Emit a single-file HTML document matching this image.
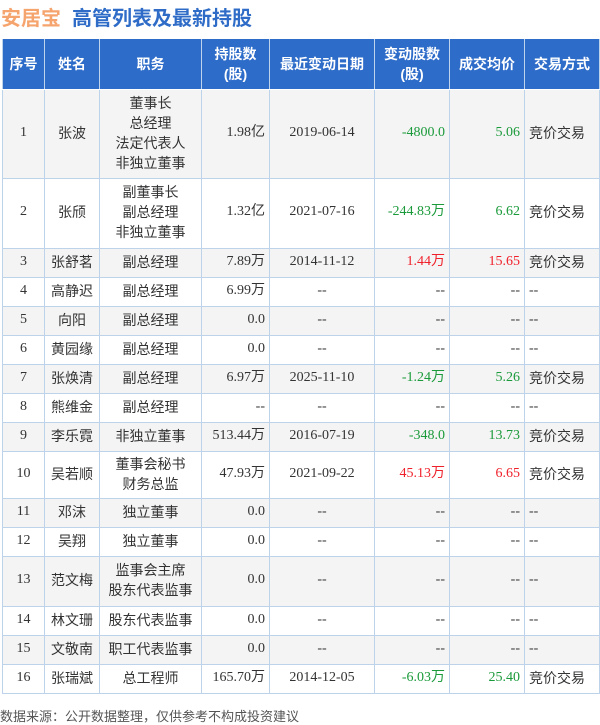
<!DOCTYPE html>
<html><head><meta charset="utf-8"><style>
body{margin:0;width:600px;height:724px;background:#fff;position:relative;overflow:hidden;font-family:"Liberation Serif","Noto Sans CJK SC",serif;color:#333}
.t{position:absolute;left:1px;top:2px;font:bold 20px "Liberation Sans","Noto Sans CJK SC",sans-serif}
.t .a{color:#f6a46e}.t .b{color:#2e6cc7;margin-left:11px}
table{position:absolute;left:2px;top:39px;border-collapse:collapse;table-layout:fixed;width:597px;font-size:14px}
td,th{border:1.5px solid #bcd3ea;padding:0 4px;line-height:20px}
th{background:#2e6cc9;color:#fff;font:bold 14px "Liberation Sans","Noto Sans CJK SC",sans-serif;height:50px;border-color:#fff #bcd3ea;border-top:none}
tr:nth-child(even) td{background:#f4f4f4}
td{text-align:center;padding-bottom:3px}
.r{text-align:right}.l{text-align:left}
.g{color:#1a9a3a}.red{color:#f0202a}
.cn{font-family:"Liberation Sans","Noto Sans CJK SC",sans-serif}
.f{position:absolute;left:0;top:706px;font:13px "Liberation Sans","Noto Sans CJK SC",sans-serif;color:#555}
</style></head><body>
<div class="t"><span class="a">安居宝</span><span class="b">高管列表及最新持股</span></div>
<table>
<colgroup><col style="width:42px"><col style="width:55px"><col style="width:102px"><col style="width:68px"><col style="width:105px"><col style="width:75px"><col style="width:75px"><col style="width:75px"></colgroup>
<tr><th>序号</th><th>姓名</th><th>职务</th><th>持股数<br>(股)</th><th>最近变动日期</th><th>变动股数<br>(股)</th><th>成交均价</th><th>交易方式</th></tr>
<tr style="height:89px"><td>1</td><td class="cn">张波</td><td class="cn">董事长<br>总经理<br>法定代表人<br>非独立董事</td><td class="r">1.98亿</td><td>2019-06-14</td><td class="r g">-4800.0</td><td class="r g">5.06</td><td class="l cn">竞价交易</td></tr>
<tr style="height:70px"><td>2</td><td class="cn">张颀</td><td class="cn">副董事长<br>副总经理<br>非独立董事</td><td class="r">1.32亿</td><td>2021-07-16</td><td class="r g">-244.83万</td><td class="r g">6.62</td><td class="l cn">竞价交易</td></tr>
<tr style="height:29px"><td>3</td><td class="cn">张舒茗</td><td class="cn">副总经理</td><td class="r">7.89万</td><td>2014-11-12</td><td class="r red">1.44万</td><td class="r red">15.65</td><td class="l cn">竞价交易</td></tr>
<tr style="height:29px"><td>4</td><td class="cn">高静迟</td><td class="cn">副总经理</td><td class="r">6.99万</td><td>--</td><td class="r">--</td><td class="r">--</td><td class="l">--</td></tr>
<tr style="height:29px"><td>5</td><td class="cn">向阳</td><td class="cn">副总经理</td><td class="r">0.0</td><td>--</td><td class="r">--</td><td class="r">--</td><td class="l">--</td></tr>
<tr style="height:29px"><td>6</td><td class="cn">黄园缘</td><td class="cn">副总经理</td><td class="r">0.0</td><td>--</td><td class="r">--</td><td class="r">--</td><td class="l">--</td></tr>
<tr style="height:29px"><td>7</td><td class="cn">张焕清</td><td class="cn">副总经理</td><td class="r">6.97万</td><td>2025-11-10</td><td class="r g">-1.24万</td><td class="r g">5.26</td><td class="l cn">竞价交易</td></tr>
<tr style="height:29px"><td>8</td><td class="cn">熊维金</td><td class="cn">副总经理</td><td class="r">--</td><td>--</td><td class="r">--</td><td class="r">--</td><td class="l">--</td></tr>
<tr style="height:29px"><td>9</td><td class="cn">李乐霓</td><td class="cn">非独立董事</td><td class="r">513.44万</td><td>2016-07-19</td><td class="r g">-348.0</td><td class="r g">13.73</td><td class="l cn">竞价交易</td></tr>
<tr style="height:47px"><td>10</td><td class="cn">吴若顺</td><td class="cn">董事会秘书<br>财务总监</td><td class="r">47.93万</td><td>2021-09-22</td><td class="r red">45.13万</td><td class="r red">6.65</td><td class="l cn">竞价交易</td></tr>
<tr style="height:29px"><td>11</td><td class="cn">邓沫</td><td class="cn">独立董事</td><td class="r">0.0</td><td>--</td><td class="r">--</td><td class="r">--</td><td class="l">--</td></tr>
<tr style="height:29px"><td>12</td><td class="cn">吴翔</td><td class="cn">独立董事</td><td class="r">0.0</td><td>--</td><td class="r">--</td><td class="r">--</td><td class="l">--</td></tr>
<tr style="height:50px"><td>13</td><td class="cn">范文梅</td><td class="cn">监事会主席<br>股东代表监事</td><td class="r">0.0</td><td>--</td><td class="r">--</td><td class="r">--</td><td class="l">--</td></tr>
<tr style="height:29px"><td>14</td><td class="cn">林文珊</td><td class="cn">股东代表监事</td><td class="r">0.0</td><td>--</td><td class="r">--</td><td class="r">--</td><td class="l">--</td></tr>
<tr style="height:29px"><td>15</td><td class="cn">文敬南</td><td class="cn">职工代表监事</td><td class="r">0.0</td><td>--</td><td class="r">--</td><td class="r">--</td><td class="l">--</td></tr>
<tr style="height:29px"><td>16</td><td class="cn">张瑞斌</td><td class="cn">总工程师</td><td class="r">165.70万</td><td>2014-12-05</td><td class="r g">-6.03万</td><td class="r g">25.40</td><td class="l cn">竞价交易</td></tr>
</table>
<div class="f">数据来源：公开数据整理，仅供参考不构成投资建议</div>
</body></html>
